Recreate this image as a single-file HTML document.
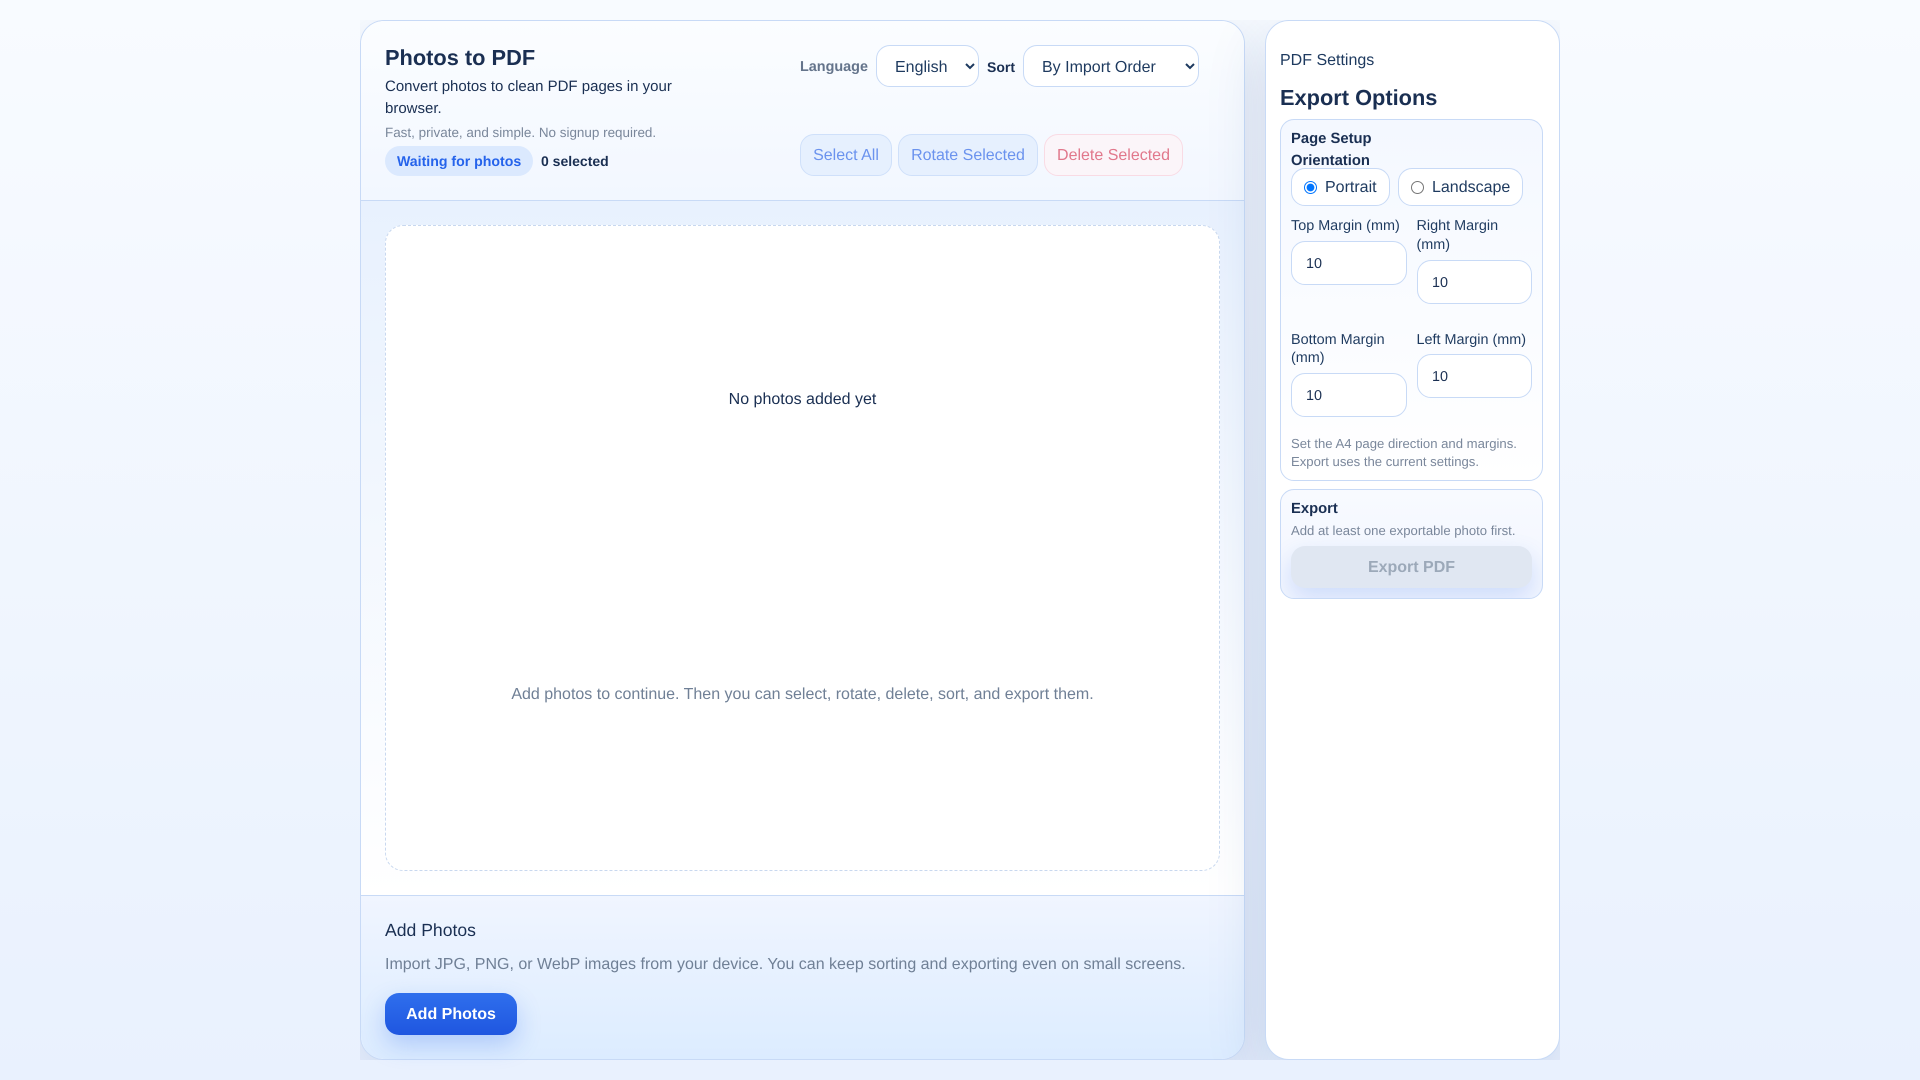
<!DOCTYPE html>
<html>
<head>
<meta charset="utf-8">
<title>Photos to PDF</title>
<style>
*{box-sizing:border-box}
html,body{margin:0;padding:0;width:1920px;height:1080px;overflow:hidden}
body{position:relative;font-family:"Liberation Sans",sans-serif;background:linear-gradient(180deg,#f8fbff 0%,#e9f1fe 100%);color:#1a2f52;text-rendering:geometricPrecision}
.t{position:absolute;white-space:nowrap;line-height:20px;height:20px}
.b{font-weight:700}
.box{position:absolute}
#shell{position:absolute;left:360px;top:20px;width:1200px;height:1040px;overflow:hidden}
#main{position:absolute;left:0;top:0;width:885px;height:1040px;border:1px solid #c8daf6;border-radius:24px;overflow:hidden;background:#fff;box-shadow:0 20px 60px rgba(30,70,140,.15)}
#side{position:absolute;left:905px;top:0;width:295px;height:1040px;border:1px solid #c8daf6;border-radius:24px;background:#fff;box-shadow:0 20px 60px rgba(30,70,140,.15)}
#hd{position:absolute;left:0;top:0;width:883px;height:180px;border-bottom:1px solid #c8daf6;background:linear-gradient(180deg,#fbfdff,#f2f7ff)}
#ct{position:absolute;left:0;top:180px;width:883px;height:694px;background:linear-gradient(180deg,#e8f1fe 0%,#ffffff 100%)}
#ft{position:absolute;left:0;top:874px;width:883px;height:165px;border-top:1px solid #c8daf6;background:linear-gradient(180deg,#f0f5ff,#dcecff)}
#dz{position:absolute;left:385px;top:225px;width:835px;height:646px;border:1px dashed #c8d8ef;border-radius:18px;background:#fff}
select{position:absolute;height:42px;border:1px solid #c8daf6;border-radius:14px;background:#fff;color:#1e3a5f;font:16px "Liberation Sans",sans-serif;padding:2px 0 0 14px;margin:0;text-rendering:geometricPrecision}
.btn{position:absolute;height:42px;top:134px;border-radius:14px;border:1px solid #cfe0fa;background:#e6f0fe;color:#6b93ee;font-size:16px;line-height:42px;text-align:center;white-space:nowrap}
.rb{position:absolute;top:168px;height:38px;border:1px solid #c8daf6;border-radius:14px;background:#fff}
.rb input{position:absolute;margin:0;top:12px;left:12px;width:13px;height:13px}
.in{position:absolute;border:1px solid #c8daf6;border-radius:14px;background:#fff;height:44px;padding:1px 14px 0;font:14.4px "Liberation Sans",sans-serif;color:#1a2f52;margin:0;outline:none;text-rendering:geometricPrecision}
.card{position:absolute;left:1280px;width:263px;border:1px solid #c8daf6;border-radius:14px;overflow:hidden}
.l{font-size:14.4px;color:#1e3a5f}
.h{color:#7a879b;font-size:13.12px}
</style>
</head>
<body>
<div id="shell">
  <div id="main">
    <div id="hd"></div>
    <div id="ct"></div>
    <div id="ft"></div>
  </div>
  <div id="side"></div>
</div>

<div class="t b" style="left:385px;top:48px;font-size:21.8px;color:#1a2f52">Photos to PDF</div>
<div class="t" style="left:385px;top:77px;font-size:15px">Convert photos to clean PDF pages in your</div>
<div class="t" style="left:385px;top:99px;font-size:15px">browser.</div>
<div class="t h" style="left:385px;top:123px;font-size:13.44px">Fast, private, and simple. No signup required.</div>
<div class="box" style="left:385px;top:146px;width:148px;height:30px;border-radius:15px;background:#dbe9fe"></div>
<div class="t b" style="left:397px;top:151px;font-size:14.14px;color:#2563eb">Waiting for photos</div>
<div class="t b" style="left:541px;top:151px;font-size:14px">0 selected</div>

<div class="t b" style="left:800px;top:57px;font-size:14.4px;color:#64748b">Language</div>
<select style="left:876px;top:45px;width:103px"><option>English</option></select>
<div class="t b" style="left:987px;top:57px;font-size:14px">Sort</div>
<select style="left:1023px;top:45px;width:176px"><option>By Import Order</option></select>

<div class="btn" style="left:800px;width:92px">Select All</div>
<div class="btn" style="left:898px;width:140px">Rotate Selected</div>
<div class="btn" style="left:1044px;width:139px;background:#fbf5f9;border-color:#f9dbe4;color:#e1788c">Delete Selected</div>

<div id="dz"></div>
<div class="t" style="left:385px;width:835px;text-align:center;top:390px;font-size:16px">No photos added yet</div>
<div class="t" style="left:385px;width:835px;text-align:center;top:685px;font-size:16px;color:#708096">Add photos to continue. Then you can select, rotate, delete, sort, and export them.</div>

<div class="t" style="left:385px;top:920px;font-size:17.6px">Add Photos</div>
<div class="t" style="left:385px;top:955px;font-size:16px;color:#708096">Import JPG, PNG, or WebP images from your device. You can keep sorting and exporting even on small screens.</div>
<div class="box" style="left:385px;top:993px;width:132px;height:42px;border-radius:14px;background:linear-gradient(180deg,#2f6fed,#1f56e0);box-shadow:0 10px 24px rgba(37,99,235,.25);color:#fff;font-weight:700;font-size:16px;line-height:43px;text-align:center">Add Photos</div>

<div class="t" style="left:1280px;top:51px;font-size:16px;color:#1e3a5f">PDF Settings</div>
<div class="t b" style="left:1280px;top:88px;font-size:21.8px">Export Options</div>

<div class="card" style="top:119px;height:362px;background:linear-gradient(180deg,#f4f8ff,#ffffff)"></div>
<div class="t b" style="left:1291px;top:129px;font-size:14.8px">Page Setup</div>
<div class="t b" style="left:1291px;top:151px;font-size:14.8px">Orientation</div>
<div class="rb" style="left:1291px;width:99px"><input type="radio" name="o" checked></div>
<div class="t" style="left:1325px;top:178px;font-size:16px;color:#1e3a5f">Portrait</div>
<div class="rb" style="left:1398px;width:125px"><input type="radio" name="o"></div>
<div class="t" style="left:1432px;top:178px;font-size:16px;color:#1e3a5f">Landscape</div>

<div class="t l" style="left:1291px;top:216px">Top Margin (mm)</div>
<input class="in" type="text" value="10" style="left:1291px;top:241px;width:116px">
<div class="t l" style="left:1416.5px;top:216px">Right Margin</div>
<div class="t l" style="left:1416.5px;top:235px">(mm)</div>
<input class="in" type="text" value="10" style="left:1417px;top:260px;width:115px">
<div class="t l" style="left:1291px;top:330px">Bottom Margin</div>
<div class="t l" style="left:1291px;top:348px">(mm)</div>
<input class="in" type="text" value="10" style="left:1291px;top:373px;width:116px">
<div class="t l" style="left:1416.5px;top:330px">Left Margin (mm)</div>
<input class="in" type="text" value="10" style="left:1417px;top:354px;width:115px">

<div class="t h" style="left:1291px;top:434px">Set the A4 page direction and margins.</div>
<div class="t h" style="left:1291px;top:452px">Export uses the current settings.</div>

<div class="card" style="top:489px;height:110px;background:linear-gradient(180deg,#f8faff,#f2f6ff)">
  <div class="box" style="left:10px;top:56px;width:241px;height:42px;border-radius:14px;background:#e0e7f2;box-shadow:0 10px 24px rgba(37,99,235,.18);color:#9ca9b9;font-weight:700;font-size:16px;line-height:43px;text-align:center">Export PDF</div>
</div>
<div class="t b" style="left:1291px;top:498.5px;font-size:14.8px">Export</div>
<div class="t h" style="left:1291px;top:521px">Add at least one exportable photo first.</div>
</body>
</html>
